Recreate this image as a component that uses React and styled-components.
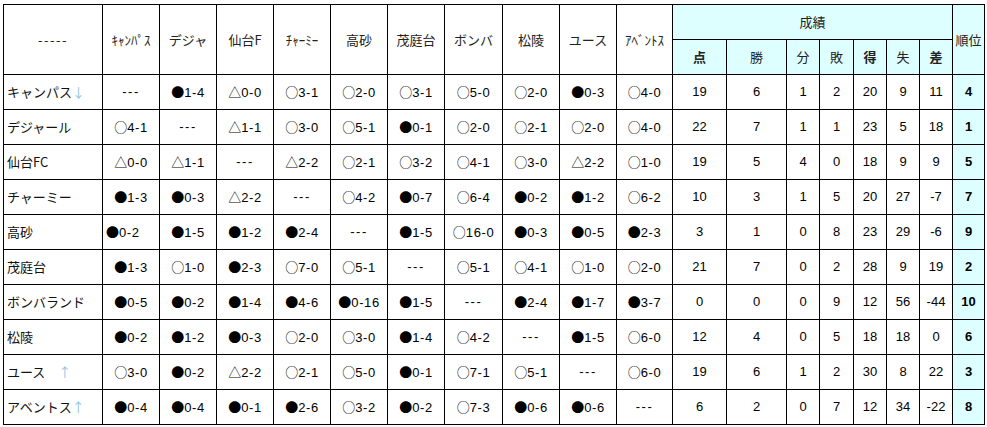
import React from "react";
import styled, { createGlobalStyle } from "styled-components";

const GlobalStyle = createGlobalStyle`
  html, body {
    margin: 0;
    padding: 0;
    background: #ffffff;
  }
  body {
    font-family: "Liberation Sans", "Noto Sans CJK JP", sans-serif;
    font-size: 13px;
    color: #000000;
  }
`;

const teams = ["ｷｬﾝﾊﾟｽ", "デジャ", "仙台F", "ﾁｬｰﾐｰ", "高砂", "茂庭台", "ボンバ", "松陵", "ユース", "ｱﾍﾞﾝﾄｽ"];

const widths = [99, 57, 57, 57, 57, 57, 57, 58, 57, 57, 56, 54, 60, 33, 34, 33, 33, 33, 32];

const rows = [
  { name: "キャンパス", arrow: "↓", games: ["---", "●1-4", "△0-0", "○3-1", "○2-0", "○3-1", "○5-0", "○2-0", "●0-3", "○4-0"], stats: [19, 6, 1, 2, 20, 9, 11], rank: 4 },
  { name: "デジャール", games: ["○4-1", "---", "△1-1", "○3-0", "○5-1", "●0-1", "○2-0", "○2-1", "○2-0", "○4-0"], stats: [22, 7, 1, 1, 23, 5, 18], rank: 1 },
  { name: "仙台FC", games: ["△0-0", "△1-1", "---", "△2-2", "○2-1", "○3-2", "○4-1", "○3-0", "△2-2", "○1-0"], stats: [19, 5, 4, 0, 18, 9, 9], rank: 5 },
  { name: "チャーミー", games: ["●1-3", "●0-3", "△2-2", "---", "○4-2", "●0-7", "○6-4", "●0-2", "●1-2", "○6-2"], stats: [10, 3, 1, 5, 20, 27, -7], rank: 7 },
  { name: "高砂", games: ["●0-2", "●1-5", "●1-2", "●2-4", "---", "●1-5", "○16-0", "●0-3", "●0-5", "●2-3"], stats: [3, 1, 0, 8, 23, 29, -6], rank: 9, leftFirst: true },
  { name: "茂庭台", games: ["●1-3", "○1-0", "●2-3", "○7-0", "○5-1", "---", "○5-1", "○4-1", "○1-0", "○2-0"], stats: [21, 7, 0, 2, 28, 9, 19], rank: 2 },
  { name: "ボンバランド", games: ["●0-5", "●0-2", "●1-4", "●4-6", "●0-16", "●1-5", "---", "●2-4", "●1-7", "●3-7"], stats: [0, 0, 0, 9, 12, 56, -44], rank: 10 },
  { name: "松陵", games: ["●0-2", "●1-2", "●0-3", "○2-0", "○3-0", "●1-4", "○4-2", "---", "●1-5", "○6-0"], stats: [12, 4, 0, 5, 18, 18, 0], rank: 6 },
  { name: "ユース　", arrow: "↑", games: ["○3-0", "●0-2", "△2-2", "○2-1", "○5-0", "●0-1", "○7-1", "○5-1", "---", "○6-0"], stats: [19, 6, 1, 2, 30, 8, 22], rank: 3 },
  { name: "アベントス", arrow: "↑", games: ["●0-4", "●0-4", "●0-1", "●2-6", "○3-2", "●0-2", "○7-3", "●0-6", "●0-6", "---"], stats: [6, 2, 0, 7, 12, 34, -22], rank: 8 },
];

const statHeads = [
  { label: "点", bold: true },
  { label: "勝" },
  { label: "分" },
  { label: "敗" },
  { label: "得", bold: true },
  { label: "失" },
  { label: "差", bold: true },
];

const Sheet = styled.div`
  padding: 4px 0 0 3px;
`;

const Table = styled.table`
  border-collapse: collapse;
  table-layout: fixed;
  width: 982px;
`;

const Row = styled.tr`
  height: 35px;
`;

const Cell = styled.td`
  border: 1px solid #000;
  padding: 0;
  text-align: ${(p) => (p.$align === "left" ? "left" : "center")};
  padding-left: ${(p) => (p.$align === "left" ? "3px" : "0")};
  vertical-align: middle;
  white-space: nowrap;
  overflow: hidden;
  font-weight: ${(p) => (p.$bold ? 700 : 400)};
  letter-spacing: ${(p) => (p.$spaced ? "0.6px" : "0")};
  background: ${(p) => (p.$tint ? "#ddffff" : "#ffffff")};
  line-height: 16px;
`;

const Head = styled(Cell).attrs({ as: "th" })`
  font-family: "Noto Sans CJK JP", sans-serif;
  font-size: 13px;
  color: #222;
`;

const Dashes = styled.span`
  letter-spacing: 1.5px;
`;

const Name = styled.span`
  font-family: "Noto Sans CJK JP", sans-serif;
  color: #111;
`;

const Arrow = styled.span`
  font-family: "Noto Sans CJK JP", sans-serif;
  color: #8fc4e8;
`;

const Mark = styled.span`
  font-family: "Noto Sans CJK JP", sans-serif;
  font-size: 13px;
  letter-spacing: 0;
`;

function Result({ text }) {
  const first = text[0];
  if (first === "●" || first === "○" || first === "△") {
    return (
      <>
        <Mark>{first}</Mark>
        {text.slice(1)}
      </>
    );
  }
  return <Dashes>{text}</Dashes>;
}

export default function App() {
  return (
    <Sheet>
      <GlobalStyle />
      <Table>
        <colgroup>
          {widths.map((w, i) => (
            <col key={i} style={{ width: w }} />
          ))}
        </colgroup>
        <thead>
          <Row>
            <Head rowSpan={2}>
              <Dashes>-----</Dashes>
            </Head>
            {teams.map((t) => (
              <Head key={t} rowSpan={2}>
                {t}
              </Head>
            ))}
            <Head colSpan={7} $tint>
              成績
            </Head>
            <Head rowSpan={2} $tint>
              順位
            </Head>
          </Row>
          <Row>
            {statHeads.map((h) => (
              <Head key={h.label} $tint $bold={h.bold}>
                {h.label}
              </Head>
            ))}
          </Row>
        </thead>
        <tbody>
          {rows.map((r) => (
            <Row key={r.name}>
              <Cell $align="left">
                <Name>{r.name}</Name>
                {r.arrow && <Arrow>{r.arrow}</Arrow>}
              </Cell>
              {r.games.map((g, i) => (
                <Cell key={i} $spaced $align={r.leftFirst && i === 0 ? "left" : "center"}>
                  <Result text={g} />
                </Cell>
              ))}
              {r.stats.map((s, i) => (
                <Cell key={i}>{s}</Cell>
              ))}
              <Cell $tint $bold>
                {r.rank}
              </Cell>
            </Row>
          ))}
        </tbody>
      </Table>
    </Sheet>
  );
}
